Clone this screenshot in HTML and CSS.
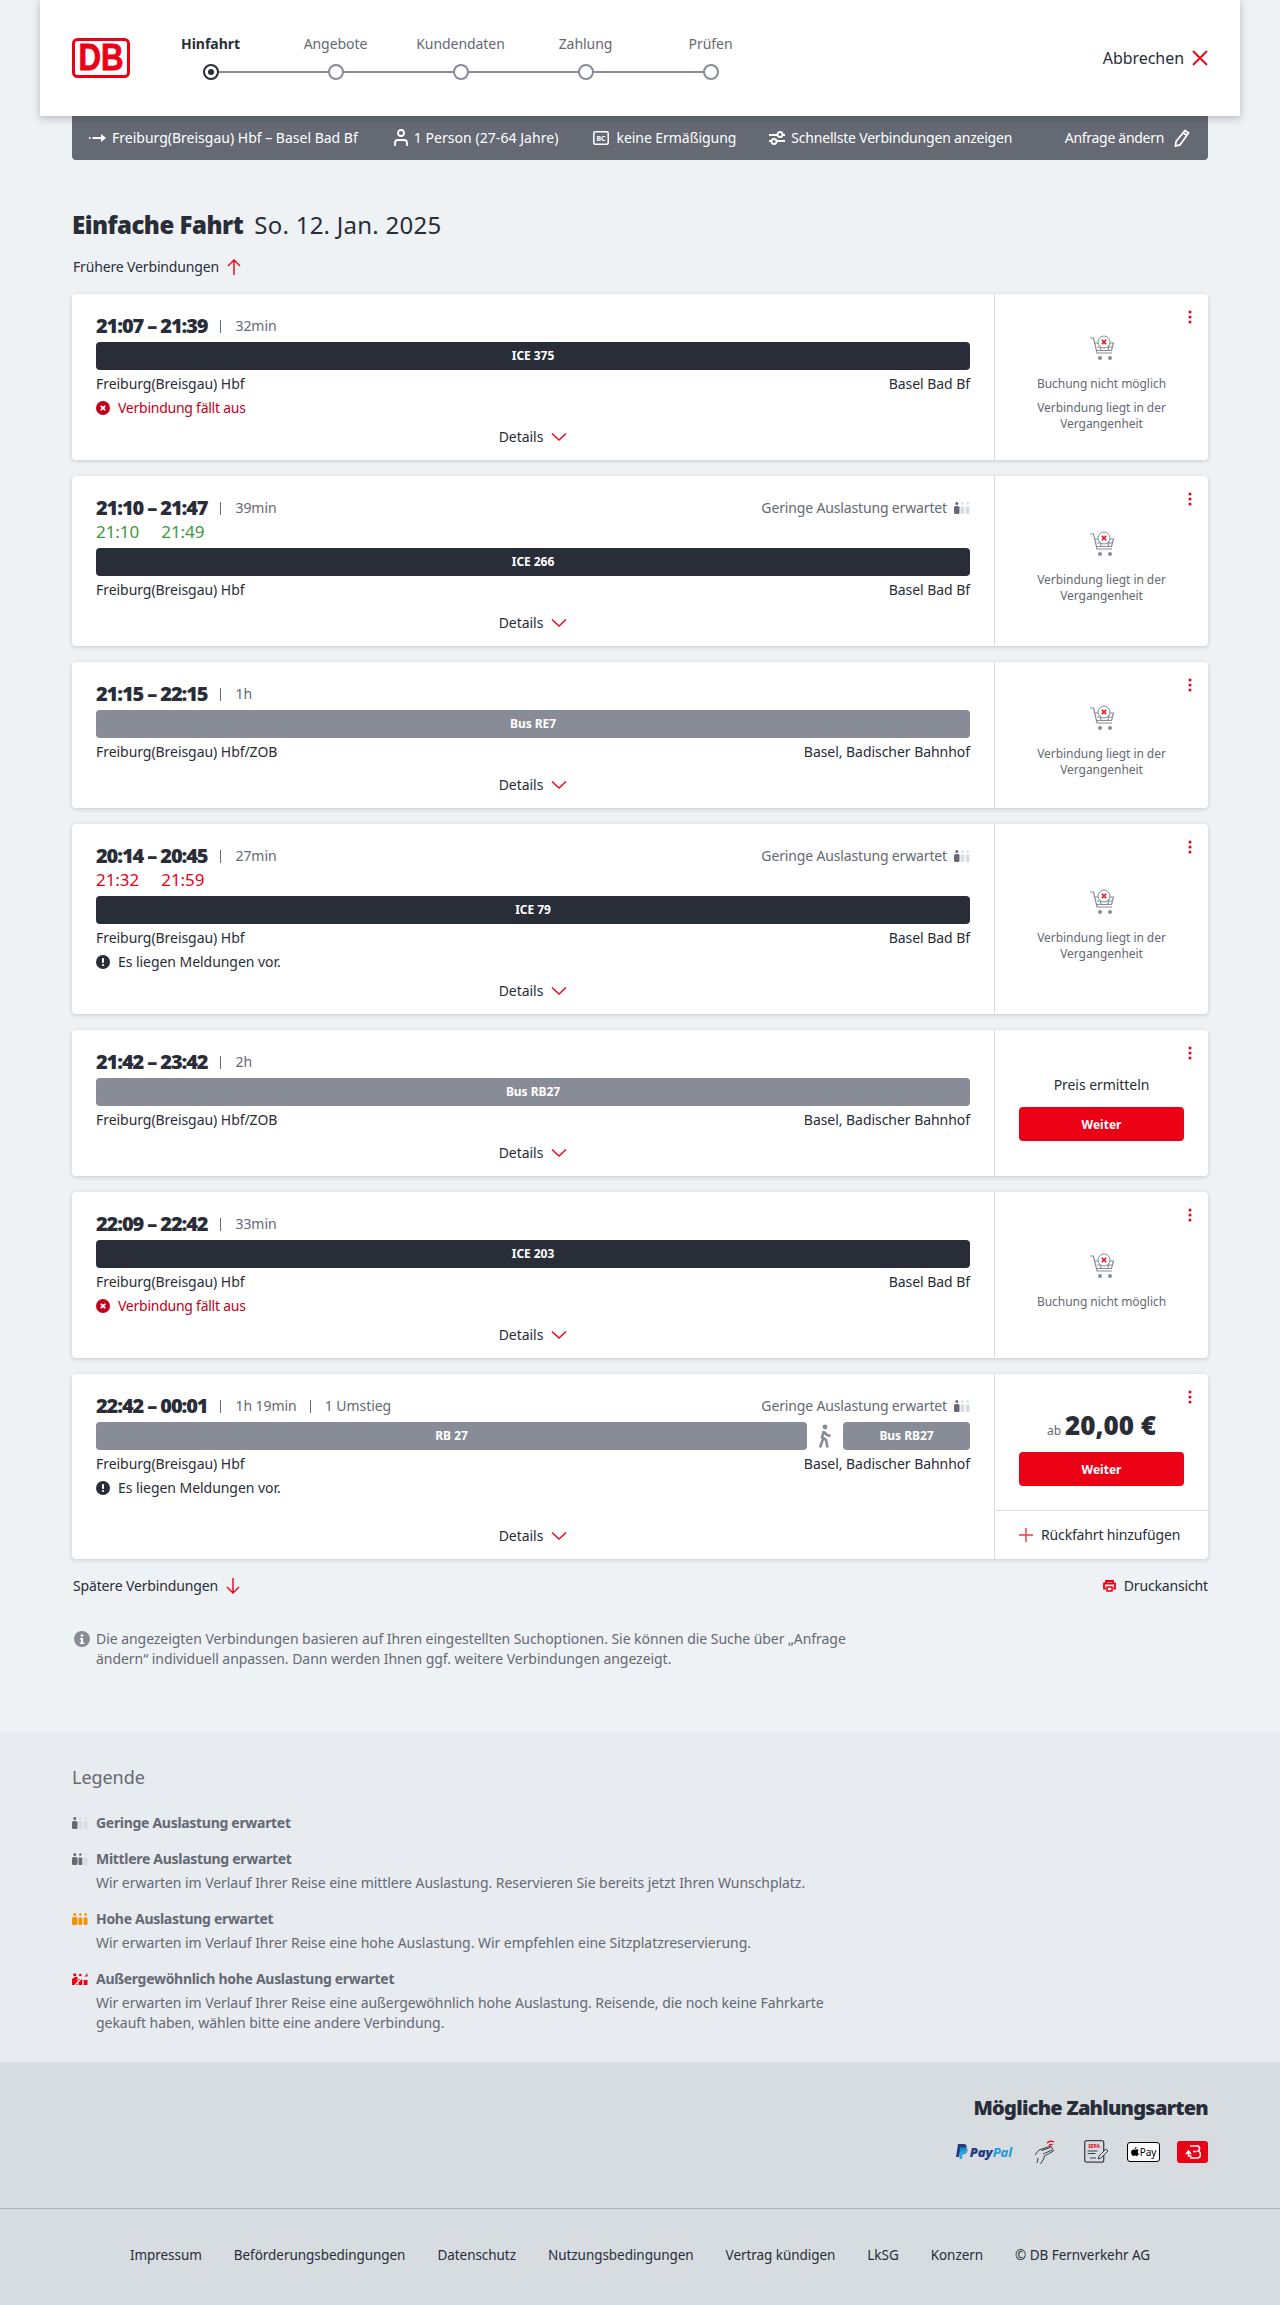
FILE: index.html
```html
<!DOCTYPE html>
<html lang="de">
<head>
    <meta charset="UTF-8">
    <meta name="viewport" content="width=device-width, initial-scale=1.0">
    <title>Einfache Fahrt</title>
    <link rel="stylesheet" href="styles.css">
</head>
<body>

    <!-- wiederkehrende Icons -->
    <svg class="sprite" width="0" height="0">
        <symbol id="chevron" viewBox="0 0 16 10"><path d="M1 1.500l7 6.500 7-6.500" fill="none" stroke="#ec0016" stroke-width="1.400"/></symbol>
        <symbol id="dots" viewBox="0 0 4 14"><circle cx="2" cy="2" r="1.500" fill="#ec0016"/><circle cx="2" cy="7" r="1.500" fill="#ec0016"/><circle cx="2" cy="12" r="1.500" fill="#ec0016"/></symbol>
        <symbol id="cart" viewBox="0 0 26 26">
            <path d="M1 3h3.500l3.500 15h15" fill="none" stroke="#878c96" stroke-width="1.200"/>
            <path d="M5.500 8h19l-2 7.500H7.500M8 12h15.500M11 8l1 7.500M20 8l-1 7.500" fill="none" stroke="#878c96" stroke-width="1.200"/>
            <circle cx="15" cy="7" r="6" fill="#fff" stroke="#878c96"/>
            <path d="M12.800 4.800l4.400 4.400M17.200 4.800l-4.400 4.400" stroke="#ec0016" stroke-width="1.400"/>
            <circle cx="11" cy="23" r="2" fill="#878c96"/><circle cx="21" cy="23" r="2" fill="#878c96"/>
        </symbol>
        <symbol id="load1" viewBox="0 0 16 12">
            <circle cx="2.800" cy="1.500" r="1.500" fill="#646973"/><rect y="4" width="5.500" height="8" rx="1.500" fill="#646973"/>
            <circle cx="8.300" cy="1.500" r="1.300" fill="#d7dce1"/><rect x="6.500" y="4.500" width="3.800" height="7.500" rx="1" fill="#d7dce1"/>
            <circle cx="13.600" cy="1.500" r="1.300" fill="#d7dce1"/><rect x="11.700" y="4.500" width="3.800" height="7.500" rx="1" fill="#d7dce1"/>
        </symbol>
        <symbol id="load2" viewBox="0 0 16 12">
            <circle cx="2.800" cy="1.500" r="1.500" fill="#646973"/><rect y="4" width="5.500" height="8" rx="1.500" fill="#646973"/>
            <circle cx="8.300" cy="1.500" r="1.300" fill="#646973"/><rect x="6.500" y="4.500" width="3.800" height="7.500" rx="1" fill="#646973"/>
            <circle cx="13.600" cy="1.500" r="1.300" fill="#d7dce1"/><rect x="11.700" y="4.500" width="3.800" height="7.500" rx="1" fill="#d7dce1"/>
        </symbol>
        <symbol id="load3" viewBox="0 0 16 12">
            <circle cx="2.800" cy="1.500" r="1.500" fill="#f39200"/><rect y="4" width="5.500" height="8" rx="1.500" fill="#f39200"/>
            <circle cx="8.300" cy="1.500" r="1.300" fill="#f39200"/><rect x="6.500" y="4.500" width="3.800" height="7.500" rx="1" fill="#f39200"/>
            <circle cx="13.600" cy="1.500" r="1.300" fill="#f39200"/><rect x="11.700" y="4.500" width="3.800" height="7.500" rx="1" fill="#f39200"/>
        </symbol>
        <symbol id="load4" viewBox="0 0 16 12">
            <circle cx="2.800" cy="1.800" r="1.500" fill="#ec0016"/><path d="M0 12V6l3-2h2.500v8z" fill="#ec0016"/>
            <circle cx="8.300" cy="2" r="1.300" fill="#ec0016"/><rect x="6.500" y="6" width="3.800" height="6" rx=".6" fill="#ec0016"/>
            <path d="M11.700 7h3.800v5h-3.800zM12 3.500h3.500V0" fill="#ec0016"/>
            <path d="M3 12L15 0" stroke="#e8ebf0" stroke-width="1.200"/>
        </symbol>
        <symbol id="err" viewBox="0 0 14 14"><circle cx="7" cy="7" r="7" fill="#c0001a"/><path d="M4.800 4.800l4.400 4.400M9.200 4.800l-4.400 4.400" stroke="#fff" stroke-width="1.800"/></symbol>
        <symbol id="warn" viewBox="0 0 14 14"><circle cx="7" cy="7" r="7" fill="#282d37"/><rect x="6" y="3" width="2" height="5" rx=".8" fill="#fff"/><circle cx="7" cy="10" r="1.100" fill="#fff"/></symbol>
    </svg>

    <header class="topbar">
        <svg class="logo" viewBox="0 0 58 40">
            <rect x="1.500" y="1.500" width="55" height="37" rx="4" fill="#fff" stroke="#ec0016" stroke-width="3"/>
            <text x="29" y="32" text-anchor="middle" textLength="45" lengthAdjust="spacingAndGlyphs" class="logo-text">DB</text>
        </svg>
        <ol class="steps">
            <li class="step active"><span>Hinfahrt</span><i></i></li>
            <li class="step"><span>Angebote</span><i></i></li>
            <li class="step"><span>Kundendaten</span><i></i></li>
            <li class="step"><span>Zahlung</span><i></i></li>
            <li class="step"><span>Prüfen</span><i></i></li>
        </ol>
        <a class="cancel-link">Abbrechen
            <svg width="16" height="16" viewBox="0 0 16 16"><path d="M1 1l14 14M15 1L1 15" stroke="#ec0016" stroke-width="1.800"/></svg>
        </a>
    </header>

    <div class="page">
        <div class="querybar">
            <span class="q q-route">
                <svg width="17" height="8" viewBox="0 0 17 8"><path d="M0 4h1.500M3.500 4H13" stroke="#fff" stroke-width="1.800" fill="none"/><path d="M12 0l5 4-5 4z" fill="#fff"/></svg>
                Freiburg(Breisgau) Hbf – Basel Bad Bf
            </span>
            <span class="q q-person">
                <svg width="14" height="18" viewBox="0 0 14 18"><circle cx="7" cy="4" r="3" fill="none" stroke="#fff" stroke-width="1.800"/><path d="M1 17v-3a3 3 0 0 1 3-3h6a3 3 0 0 1 3 3v3" fill="none" stroke="#fff" stroke-width="1.800"/></svg>
                1 Person (27-64 Jahre)
            </span>
            <span class="q q-card">
                <svg width="16" height="14" viewBox="0 0 16 14"><rect x=".8" y=".8" width="14.400" height="12.400" rx="1.500" fill="none" stroke="#fff" stroke-width="1.500"/><text x="8" y="10" text-anchor="middle" class="bc-text">BC</text></svg>
                keine Ermäßigung
            </span>
            <span class="q q-fast">
                <svg width="16" height="14" viewBox="0 0 16 14"><path d="M0 4h16M0 10h16" stroke="#fff" stroke-width="1.800"/><circle cx="11" cy="3.500" r="2.500" fill="#646973" stroke="#fff" stroke-width="1.800"/><circle cx="5" cy="10.500" r="2.500" fill="#646973" stroke="#fff" stroke-width="1.800"/></svg>
                Schnellste Verbindungen anzeigen
            </span>
            <span class="q q-edit">
                Anfrage ändern
                <svg width="16" height="18" viewBox="0 0 16 18"><path d="M11 1.500l3.500 2.500L6 16l-4.500 1L2 12.500zM9.500 4l3.500 2.500" fill="none" stroke="#fff" stroke-width="1.800"/></svg>
            </span>
        </div>

        <h1 class="title"><b>Einfache Fahrt</b><span>So. 12. Jan. 2025</span></h1>

        <a class="pager pager-top">Frühere Verbindungen
            <svg width="14" height="16" viewBox="0 0 14 16"><path d="M7 16V1M1 7l6-6 6 6" fill="none" stroke="#ec0016" stroke-width="1.400"/></svg>
        </a>

        <section class="cards">

            <article class="card">
                <div class="conn">
                    <div class="conn-head"><span class="times">21:07 – 21:39</span><span class="sep"></span><span class="dur">32min</span></div>
                    <div class="bars"><div class="bar">ICE 375</div></div>
                    <div class="stations"><span>Freiburg(Breisgau) Hbf</span><span>Basel Bad Bf</span></div>
                    <div class="msg msg-cancel"><svg width="14" height="14"><use href="#err"/></svg>Verbindung fällt aus</div>
                    <a class="details">Details <svg width="16" height="10"><use href="#chevron"/></svg></a>
                </div>
                <div class="offer">
                    <svg class="more" width="4" height="14"><use href="#dots"/></svg>
                    <svg class="cart" width="26" height="26"><use href="#cart"/></svg>
                    <p class="note">Buchung nicht möglich</p>
                    <p class="note">Verbindung liegt in der Vergangenheit</p>
                </div>
            </article>

            <article class="card">
                <div class="conn">
                    <div class="conn-head"><span class="times">21:10 – 21:47</span><span class="sep"></span><span class="dur">39min</span>
                        <span class="load">Geringe Auslastung erwartet <svg width="16" height="12"><use href="#load1"/></svg></span></div>
                    <div class="rt rt-ok"><span>21:10</span><span>21:49</span></div>
                    <div class="bars"><div class="bar">ICE 266</div></div>
                    <div class="stations"><span>Freiburg(Breisgau) Hbf</span><span>Basel Bad Bf</span></div>
                    <a class="details details-plain">Details <svg width="16" height="10"><use href="#chevron"/></svg></a>
                </div>
                <div class="offer">
                    <svg class="more" width="4" height="14"><use href="#dots"/></svg>
                    <svg class="cart" width="26" height="26"><use href="#cart"/></svg>
                    <p class="note">Verbindung liegt in der Vergangenheit</p>
                </div>
            </article>

            <article class="card">
                <div class="conn">
                    <div class="conn-head"><span class="times">21:15 – 22:15</span><span class="sep"></span><span class="dur">1h</span></div>
                    <div class="bars"><div class="bar bar-grey">Bus RE7</div></div>
                    <div class="stations"><span>Freiburg(Breisgau) Hbf/ZOB</span><span>Basel, Badischer Bahnhof</span></div>
                    <a class="details details-plain">Details <svg width="16" height="10"><use href="#chevron"/></svg></a>
                </div>
                <div class="offer">
                    <svg class="more" width="4" height="14"><use href="#dots"/></svg>
                    <svg class="cart" width="26" height="26"><use href="#cart"/></svg>
                    <p class="note">Verbindung liegt in der Vergangenheit</p>
                </div>
            </article>

            <article class="card">
                <div class="conn">
                    <div class="conn-head"><span class="times">20:14 – 20:45</span><span class="sep"></span><span class="dur">27min</span>
                        <span class="load">Geringe Auslastung erwartet <svg width="16" height="12"><use href="#load1"/></svg></span></div>
                    <div class="rt rt-late"><span>21:32</span><span>21:59</span></div>
                    <div class="bars"><div class="bar">ICE 79</div></div>
                    <div class="stations"><span>Freiburg(Breisgau) Hbf</span><span>Basel Bad Bf</span></div>
                    <div class="msg"><svg width="14" height="14"><use href="#warn"/></svg>Es liegen Meldungen vor.</div>
                    <a class="details">Details <svg width="16" height="10"><use href="#chevron"/></svg></a>
                </div>
                <div class="offer">
                    <svg class="more" width="4" height="14"><use href="#dots"/></svg>
                    <svg class="cart" width="26" height="26"><use href="#cart"/></svg>
                    <p class="note">Verbindung liegt in der Vergangenheit</p>
                </div>
            </article>

            <article class="card">
                <div class="conn">
                    <div class="conn-head"><span class="times">21:42 – 23:42</span><span class="sep"></span><span class="dur">2h</span></div>
                    <div class="bars"><div class="bar bar-grey">Bus RB27</div></div>
                    <div class="stations"><span>Freiburg(Breisgau) Hbf/ZOB</span><span>Basel, Badischer Bahnhof</span></div>
                    <a class="details details-plain">Details <svg width="16" height="10"><use href="#chevron"/></svg></a>
                </div>
                <div class="offer offer-price">
                    <svg class="more" width="4" height="14"><use href="#dots"/></svg>
                    <p class="price-hint">Preis ermitteln</p>
                    <button class="btn">Weiter</button>
                </div>
            </article>

            <article class="card">
                <div class="conn">
                    <div class="conn-head"><span class="times">22:09 – 22:42</span><span class="sep"></span><span class="dur">33min</span></div>
                    <div class="bars"><div class="bar">ICE 203</div></div>
                    <div class="stations"><span>Freiburg(Breisgau) Hbf</span><span>Basel Bad Bf</span></div>
                    <div class="msg msg-cancel"><svg width="14" height="14"><use href="#err"/></svg>Verbindung fällt aus</div>
                    <a class="details">Details <svg width="16" height="10"><use href="#chevron"/></svg></a>
                </div>
                <div class="offer">
                    <svg class="more" width="4" height="14"><use href="#dots"/></svg>
                    <svg class="cart" width="26" height="26"><use href="#cart"/></svg>
                    <p class="note">Buchung nicht möglich</p>
                </div>
            </article>

            <article class="card">
                <div class="conn">
                    <div class="conn-head"><span class="times">22:42 – 00:01</span><span class="sep"></span><span class="dur">1h 19min</span><span class="sep"></span><span class="dur">1 Umstieg</span>
                        <span class="load">Geringe Auslastung erwartet <svg width="16" height="12"><use href="#load1"/></svg></span></div>
                    <div class="bars">
                        <div class="bar bar-grey">RB 27</div>
                        <svg class="walk" width="14" height="24" viewBox="0 0 14 24">
                            <circle cx="7" cy="3" r="2.400" fill="#878c96"/>
                            <path d="M6 7l-2 6 4 3 1.500 7.500M5 15l-3 8.500M6 8l3 3 3.500 1" fill="none" stroke="#878c96" stroke-width="2.600"/>
                        </svg>
                        <div class="bar bar-grey bar-short">Bus RB27</div>
                    </div>
                    <div class="stations"><span>Freiburg(Breisgau) Hbf</span><span>Basel, Badischer Bahnhof</span></div>
                    <div class="msg"><svg width="14" height="14"><use href="#warn"/></svg>Es liegen Meldungen vor.</div>
                    <a class="details details-end">Details <svg width="16" height="10"><use href="#chevron"/></svg></a>
                </div>
                <div class="offer offer-buy">
                    <svg class="more" width="4" height="14"><use href="#dots"/></svg>
                    <div class="buy">
                        <p class="price"><small>ab</small> <b>20,00 €</b></p>
                        <button class="btn">Weiter</button>
                    </div>
                    <a class="return-link">
                        <svg width="14" height="14" viewBox="0 0 14 14"><path d="M7 0v14M0 7h14" stroke="#ec0016" stroke-width="1.400" opacity=".8"/></svg>
                        Rückfahrt hinzufügen
                    </a>
                </div>
            </article>
        </section>

        <div class="after-cards">
            <a class="pager">Spätere Verbindungen
                <svg width="14" height="16" viewBox="0 0 14 16"><path d="M7 0v15M1 9l6 6 6-6" fill="none" stroke="#ec0016" stroke-width="1.400"/></svg>
            </a>
            <a class="pager print-link">
                <svg width="13" height="12" viewBox="0 0 13 12"><path d="M3 3V1h7v2M3 8.500H1V3.500h11v5h-2" fill="none" stroke="#ec0016" stroke-width="1.800"/><path d="M4 7h5v4H4z" fill="none" stroke="#ec0016" stroke-width="1.500"/></svg>
                Druckansicht
            </a>
        </div>

        <div class="hint">
            <svg width="16" height="16" viewBox="0 0 16 16"><circle cx="8" cy="8" r="8" fill="#878c96"/><circle cx="8" cy="4.500" r="1.300" fill="#fff"/><path d="M6 7h3v4.500h1.200V13H5.800v-1.500H7V8.500H6z" fill="#fff"/></svg>
            <p>Die angezeigten Verbindungen basieren auf Ihren eingestellten Suchoptionen. Sie können die Suche über „Anfrage<br>ändern“ individuell anpassen. Dann werden Ihnen ggf. weitere Verbindungen angezeigt.</p>
        </div>
    </div>

    <section class="legend">
        <div class="legend-inner">
            <h2>Legende</h2>
            <div class="legend-item">
                <svg width="16" height="12"><use href="#load1"/></svg>
                <div><h3>Geringe Auslastung erwartet</h3></div>
            </div>
            <div class="legend-item">
                <svg width="16" height="12"><use href="#load2"/></svg>
                <div><h3>Mittlere Auslastung erwartet</h3>
                <p>Wir erwarten im Verlauf Ihrer Reise eine mittlere Auslastung. Reservieren Sie bereits jetzt Ihren Wunschplatz.</p></div>
            </div>
            <div class="legend-item">
                <svg width="16" height="12"><use href="#load3"/></svg>
                <div><h3>Hohe Auslastung erwartet</h3>
                <p>Wir erwarten im Verlauf Ihrer Reise eine hohe Auslastung. Wir empfehlen eine Sitzplatzreservierung.</p></div>
            </div>
            <div class="legend-item">
                <svg width="16" height="12"><use href="#load4"/></svg>
                <div><h3>Außergewöhnlich hohe Auslastung erwartet</h3>
                <p>Wir erwarten im Verlauf Ihrer Reise eine außergewöhnlich hohe Auslastung. Reisende, die noch keine Fahrkarte<br>gekauft haben, wählen bitte eine andere Verbindung.</p></div>
            </div>
        </div>
    </section>

    <footer class="footer">
        <div class="pay">
            <h2>Mögliche Zahlungsarten</h2>
            <div class="pay-icons">
                <span class="paypal">
                    <svg width="13" height="15" viewBox="0 0 13 15"><path d="M3 0h5.500C11 0 12 1.500 11.500 3.500 11 6.500 9 7.500 6.500 7.500H5L4 13H1z" fill="#253b80"/><path d="M5 3.500h6c1.500.5 2 2 1.500 3.500-.5 2.500-2.500 3.500-4.500 3.500H7.500L7 15H4.500z" fill="#179bd7" opacity=".85"/></svg>
                    <span><b>Pay</b><i>Pal</i></span>
                </span>
                <svg class="pay-nfc" width="22" height="24" viewBox="0 0 22 24">
                    <path d="M13 3a6 6 0 0 1 7-1M15 5.500a3 3 0 0 1 3.500-.8" fill="none" stroke="#ec0016" stroke-width="1.300"/>
                    <path d="M1 15l4-5 12-4 2.500 5-9 5-1 3-3 5M3 23l1-5M7.500 10.500l9-3M9 14l9-4" fill="none" stroke="#3c414b" stroke-width="1"/>
                </svg>
                <svg class="pay-sepa" width="25" height="23" viewBox="0 0 25 23">
                    <rect x=".7" y=".7" width="19" height="21.500" rx="2" fill="none" stroke="#3c414b" stroke-width="1.300"/>
                    <text x="10" y="8" text-anchor="middle" class="sepa-text">SEPA</text>
                    <path d="M3.500 11h10M3.500 13.500h8M6 18h6" stroke="#3c414b" stroke-width="1"/>
                    <path d="M14 19l1-3 7-7 2 2-7 7z" fill="#d7dce1" stroke="#3c414b" stroke-width="1"/>
                </svg>
                <span class="apple-pay">
                    <svg width="8" height="10" viewBox="0 0 7 9"><path d="M5 0c0 1-1 2-2 2 0-1 1-2 2-2zM3.500 2.500c.5 0 1-.4 1.800-.4.6 0 1.200.3 1.500.8-1.200.8-1 2.600.2 3.100-.4 1-1 2-1.800 2-.6 0-.8-.4-1.600-.4s-1 .4-1.600.4C.9 8 0 6.200 0 4.700c0-1.600 1-2.500 2-2.500.6 0 1.100.3 1.500.3z" fill="#000"/></svg>
                    Pay
                </span>
                <span class="db-pay">
                    <svg width="16" height="14" viewBox="0 0 16 14"><path d="M5 1h6.500a2.500 2.500 0 0 1 1 5 2.800 2.800 0 0 1-1 7H5M8 6.500h3.500" fill="none" stroke="#fff" stroke-width="1.600"/><path d="M1 9l2.500-3L6 9M3.500 7v4h3" fill="none" stroke="#fff" stroke-width="1.600"/></svg>
                </span>
            </div>
        </div>
        <nav class="footer-links">
            <a>Impressum</a>
            <a>Beförderungsbedingungen</a>
            <a>Datenschutz</a>
            <a>Nutzungsbedingungen</a>
            <a>Vertrag kündigen</a>
            <a>LkSG</a>
            <a>Konzern</a>
            <a>© DB Fernverkehr AG</a>
        </nav>
    </footer>

</body>
</html>
```

FILE: styles.css
```css
* {
    box-sizing: border-box;
}

body {
    font-family: 'Noto Sans', 'Liberation Sans', sans-serif;
    font-size: 14px;
    line-height: 20px;
    letter-spacing: -0.05px;
    color: #282d37;
    background-color: #eff2f5;
    margin: 0;
}

p, h1, h2, h3, ol {
    margin: 0;
    padding: 0;
}

svg {
    flex: none;
    display: block;
}

.sprite {
    position: absolute;
}

/* Kopf */
.topbar {
    position: relative;
    z-index: 2;
    width: 1200px;
    height: 116px;
    margin: 0 auto;
    padding: 0 32px;
    background-color: #fff;
    box-shadow: 0 2px 8px rgba(40, 45, 55, 0.3);
    display: flex;
    align-items: center;
}

.logo {
    width: 58px;
    height: 40px;
    margin-top: -1px;
}

.logo-text {
    font-family: 'Liberation Sans', sans-serif;
    font-weight: bold;
    font-size: 36px;
    fill: #ec0016;
    stroke: #ec0016;
    stroke-width: 0.8;
}

.steps {
    list-style: none;
    display: flex;
    margin-left: 18px;
    margin-bottom: 2px;
}

.step {
    position: relative;
    width: 125px;
    display: flex;
    flex-direction: column;
    align-items: center;
    gap: 10px;
    color: #646973;
}

.step i {
    position: relative;
    z-index: 1;
    width: 16px;
    height: 16px;
    border: 2px solid #878c96;
    border-radius: 50%;
    background-color: #fff;
}

.step::after {
    content: '';
    position: absolute;
    left: 50%;
    bottom: 7px;
    width: 100%;
    height: 2px;
    background-color: #878c96;
}

.step:last-child::after {
    display: none;
}

.step.active {
    color: #282d37;
    font-weight: bold;
}

.step.active i {
    border-color: #282d37;
}

.step.active i::after {
    content: '';
    display: block;
    width: 6px;
    height: 6px;
    margin: 3px;
    border-radius: 50%;
    background-color: #282d37;
}

.cancel-link {
    margin-left: auto;
    display: flex;
    align-items: center;
    gap: 8px;
    font-size: 16px;
}

/* Inhalt */
.page {
    width: 1136px;
    margin: 0 auto;
}

.querybar {
    height: 44px;
    padding: 0 18px 0 17px;
    background-color: #646973;
    color: #fff;
    border-radius: 0 0 4px 4px;
    display: flex;
    align-items: center;
}

.q {
    display: flex;
    align-items: center;
    gap: 6px;
}

.q-route {
    letter-spacing: 0;
}

.q-person {
    margin-left: 36px;
    letter-spacing: 0.05px;
}

.q-card {
    margin-left: 35px;
    gap: 7px;
}

.q-fast {
    margin-left: 33px;
    letter-spacing: -0.2px;
}

.q-edit {
    margin-left: auto;
    gap: 10px;
    letter-spacing: -0.3px;
}

.bc-text {
    font-size: 7px;
    font-weight: bold;
    fill: #fff;
}

.title {
    margin-top: 49px;
    font-size: 24px;
    line-height: 32px;
    font-weight: normal;
    display: flex;
    gap: 11px;
}

.title b {
    font-weight: 900;
    letter-spacing: -0.5px;
}

.title span {
    letter-spacing: 0.25px;
}

.pager {
    display: flex;
    align-items: center;
    gap: 8px;
    line-height: 24px;
    letter-spacing: -0.15px;
}

.pager-top {
    margin: 14px 0 15px 1px;
}

.cards {
    display: flex;
    flex-direction: column;
    gap: 16px;
}

.card {
    display: flex;
    background-color: #fff;
    border-radius: 4px;
    box-shadow: 0 1px 4px rgba(40, 45, 55, 0.2);
}

.conn {
    flex: 1;
    min-width: 0;
    padding: 20px 24px 11px;
    display: flex;
    flex-direction: column;
}

.conn-head {
    display: flex;
    align-items: center;
    height: 24px;
    color: #646973;
}

.times {
    font-size: 20px;
    font-weight: 900;
    color: #282d37;
    letter-spacing: -1.1px;
}

.sep {
    width: 1px;
    height: 13px;
    margin: 0 14px 0 13px;
    background-color: #646973;
}

.load {
    margin-left: auto;
    display: flex;
    align-items: center;
    gap: 7px;
    letter-spacing: -0.15px;
}

.rt {
    display: flex;
    gap: 22px;
    font-size: 17px;
    line-height: 24px;
}

.rt-ok {
    color: #3b9a3b;
}

.rt-late {
    color: #ec0016;
}

.bars {
    display: flex;
    align-items: center;
    gap: 11px;
    margin-top: 4px;
}

.bar {
    flex: 1;
    height: 28px;
    border-radius: 4px;
    background-color: #282d37;
    color: #fff;
    font-size: 12px;
    font-weight: bold;
    line-height: 28px;
    text-align: center;
}

.bar-grey {
    background-color: #878c96;
}

.bar-short {
    flex: none;
    width: 127px;
}

.stations {
    display: flex;
    justify-content: space-between;
    margin-top: 2px;
    line-height: 24px;
}

.msg {
    display: flex;
    align-items: center;
    gap: 8px;
    line-height: 24px;
}

.msg-cancel {
    color: #c0001a;
    letter-spacing: -0.25px;
}

.details {
    margin-top: 5px;
    display: flex;
    align-items: center;
    justify-content: center;
    gap: 8px;
    line-height: 24px;
}

.details-plain {
    margin-top: 9px;
}

.details-end {
    margin-top: auto;
}

/* Angebot rechts */
.offer {
    position: relative;
    flex: none;
    width: 214px;
    border-left: 1px solid #d7dce1;
    padding: 12px 24px 0;
    display: flex;
    flex-direction: column;
    align-items: center;
    justify-content: center;
    text-align: center;
}

.more {
    position: absolute;
    top: 16px;
    right: 16px;
}

.cart {
    margin-bottom: 15px;
}

.note {
    font-size: 12px;
    line-height: 16px;
    color: #646973;
}

.note + .note {
    margin-top: 8px;
}

.price-hint {
    line-height: 20px;
    margin-bottom: 12px;
}

.offer-price {
    padding-top: 10px;
}

.btn {
    width: 165px;
    height: 34px;
    border: none;
    border-radius: 4px;
    background-color: #ec0016;
    color: #fff;
    font-family: inherit;
    font-size: 12px;
    font-weight: bold;
}

.offer-buy {
    padding: 0;
    justify-content: flex-start;
}

.buy {
    width: 100%;
    padding: 35px 24px 24px;
    display: flex;
    flex-direction: column;
    align-items: center;
    gap: 11px;
}

.price {
    height: 32px;
    display: flex;
    align-items: baseline;
    gap: 4px;
    line-height: 32px;
}

.price small {
    font-size: 12px;
    color: #646973;
}

.price b {
    font-size: 26px;
    font-weight: 900;
    letter-spacing: 0;
}

.return-link {
    width: 100%;
    height: 49px;
    padding-left: 24px;
    border-top: 1px solid #d7dce1;
    display: flex;
    align-items: center;
    gap: 8px;
    letter-spacing: -0.15px;
}

.after-cards {
    margin-top: 15px;
    padding-left: 1px;
    display: flex;
    justify-content: space-between;
}

.print-link {
    gap: 8px;
}

.hint {
    margin-top: 31px;
    padding-left: 2px;
    display: flex;
    gap: 6px;
    color: #646973;
}

.hint svg {
    margin-top: 2px;
}

/* Legende */
.legend {
    margin-top: 64px;
    background-color: #e8ebf0;
    padding: 32px 0 29px;
}

.legend-inner {
    width: 1136px;
    margin: 0 auto;
}

.legend h2 {
    font-size: 18px;
    font-weight: normal;
    line-height: 24px;
    color: #646973;
    margin-bottom: 24px;
}

.legend-item {
    display: flex;
    gap: 8px;
    margin-top: 16px;
    color: #646973;
}

.legend-item svg {
    margin-top: 4px;
}

.legend-item h3 {
    font-size: 14px;
    line-height: 20px;
    letter-spacing: -0.3px;
}

.legend-item p {
    margin-top: 4px;
}

.legend h2 + .legend-item {
    margin-top: 0;
}

/* Fuss */
.footer {
    height: 243px;
    background-color: #d7dce1;
}

.pay {
    width: 1136px;
    height: 146px;
    margin: 0 auto;
    padding-top: 32px;
    text-align: right;
}

.pay h2 {
    font-size: 20px;
    font-weight: 900;
    line-height: 28px;
    letter-spacing: -0.75px;
}

.pay-icons {
    margin-top: 18px;
    display: flex;
    justify-content: flex-end;
    align-items: center;
    height: 23px;
}

.paypal {
    display: flex;
    align-items: center;
    gap: 2px;
    font-size: 13px;
    font-style: italic;
    font-weight: bold;
    color: #253b80;
}

.paypal i {
    color: #179bd7;
}

.pay-nfc {
    margin-left: 22px;
}

.pay-sepa {
    margin-left: 28px;
}

.sepa-text {
    font-size: 5px;
    font-weight: bold;
    fill: #ec0016;
}

.apple-pay {
    margin-left: 18px;
    width: 33px;
    height: 20px;
    background-color: #fff;
    border: 1px solid #000;
    border-radius: 3px;
    display: flex;
    align-items: center;
    justify-content: center;
    gap: 1px;
    font-size: 10px;
    color: #000;
}

.db-pay {
    margin-left: 17px;
    width: 31px;
    height: 22px;
    background-color: #ec0016;
    border-radius: 3px;
    display: flex;
    align-items: center;
    justify-content: center;
}

.footer-links {
    border-top: 1px solid #afb4bb;
    padding-top: 36px;
    display: flex;
    justify-content: center;
    gap: 32px;
    font-size: 13.5px;
}
```
